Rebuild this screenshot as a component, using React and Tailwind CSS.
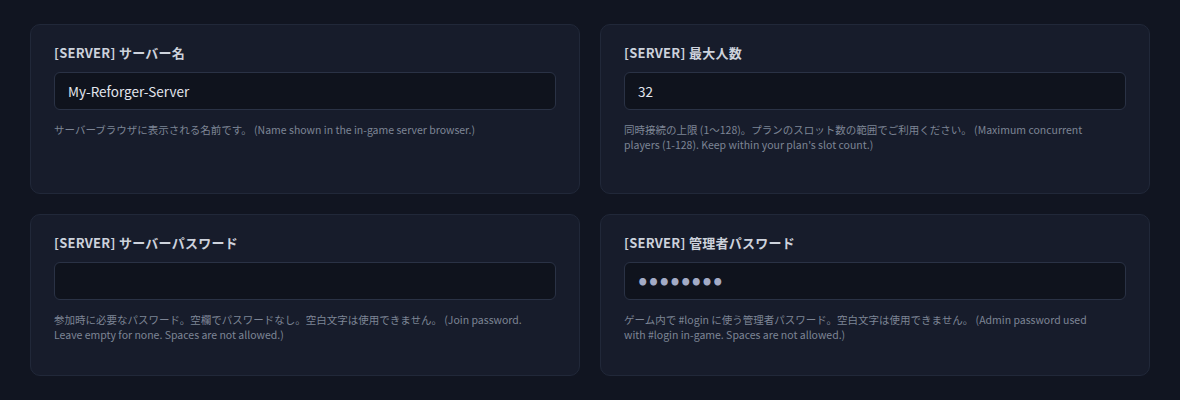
import { useState } from 'react'

const fields = [
  {
    id: 'server-name',
    label: '[SERVER] サーバー名',
    type: 'text',
    value: 'My-Reforger-Server',
    help: 'サーバーブラウザに表示される名前です。 (Name shown in the in-game server browser.)',
  },
  {
    id: 'max-players',
    label: '[SERVER] 最大人数',
    type: 'text',
    value: '32',
    help: '同時接続の上限 (1〜128)。プランのスロット数の範囲でご利用ください。 (Maximum concurrent players (1-128). Keep within your plan\'s slot count.)',
  },
  {
    id: 'server-password',
    label: '[SERVER] サーバーパスワード',
    type: 'password',
    value: '',
    help: '参加時に必要なパスワード。空欄でパスワードなし。空白文字は使用できません。 (Join password. Leave empty for none. Spaces are not allowed.)',
  },
  {
    id: 'admin-password',
    label: '[SERVER] 管理者パスワード',
    type: 'password',
    value: 'adminpw1',
    help: 'ゲーム内で #login に使う管理者パスワード。空白文字は使用できません。 (Admin password used with #login in-game. Spaces are not allowed.)',
  },
]

function SettingCard({ field, tall }) {
  const [value, setValue] = useState(field.value)
  const isPassword = field.type === 'password'
  return (
    <div
      className={
        'flex flex-col rounded-[10px] border border-[#212839] bg-[#171c2b] px-[23px] pt-[18px] ' +
        (tall ? 'h-[170px]' : 'h-[162px]')
      }
    >
      <label htmlFor={field.id} className="text-[13px] font-bold leading-5 tracking-[0.02em] text-[#cdd2dc]">
        {field.label}
      </label>
      <input
        id={field.id}
        type={field.type}
        value={value}
        onChange={(e) => setValue(e.target.value)}
        className={
          'mt-[9px] h-[38px] w-full rounded-md border border-[#2a3245] bg-[#0f131d] px-[13px] outline-none ' +
          (isPassword
            ? 'pb-[6px] text-[28px] tracking-[1.2px] text-[#a3abc6]'
            : 'text-[13.5px] text-[#e2e6ee]')
        }
      />
      <p className="mt-[12px] max-w-[476px] text-[10.5px] leading-[15px] text-[#7d8595]">{field.help}</p>
    </div>
  )
}

export default function App() {
  return (
    <div
      className="min-h-[400px] bg-[#111521] px-[30px] pt-6"
      style={{ fontFamily: '"Noto Sans CJK JP", "Noto Sans", sans-serif' }}
    >
      <div className="grid grid-cols-2 gap-5">
        {fields.map((f, i) => (
          <SettingCard key={f.id} field={f} tall={i < 2} />
        ))}
      </div>
    </div>
  )
}
